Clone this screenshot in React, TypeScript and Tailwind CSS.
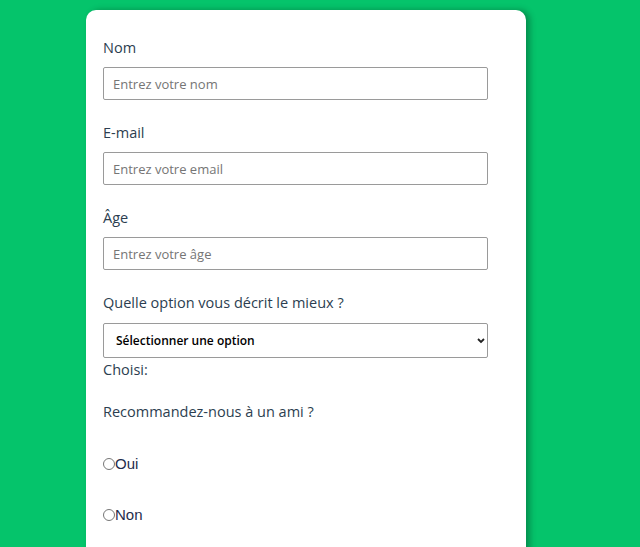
import React, { useState } from 'react';

const fields = [
  { id: 'nom', label: 'Nom', type: 'text', placeholder: 'Entrez votre nom' },
  { id: 'email', label: 'E-mail', type: 'email', placeholder: 'Entrez votre email' },
  { id: 'age', label: 'Âge', type: 'number', placeholder: 'Entrez votre âge' },
];

const App: React.FC = () => {
  const [choice, setChoice] = useState('');

  return (
    <main className="min-h-[547px] w-full bg-[#05c46b] pt-[10px] pl-[86px] font-['Open_Sans',sans-serif]">
      <form className="w-[440px] min-h-[560px] rounded-[10px] bg-white px-[17px] pt-[28px] shadow-[4px_0_6px_rgba(0,0,0,0.28)]">
        {fields.map((f) => (
          <div key={f.id} className="mb-[23px]">
            <label htmlFor={f.id} className="mb-[9px] block text-[14.5px] leading-[20px] text-[#2c3e50]">
              {f.label}
            </label>
            <input
              id={f.id}
              type={f.type}
              placeholder={f.placeholder}
              className="block h-[33px] w-[385px] rounded-[2px] border border-[#9a9a9a] px-[9px] text-[13px] text-[#333] placeholder:text-[#757575] outline-none"
            />
          </div>
        ))}

        <label htmlFor="option" className="mb-[10px] block text-[14.5px] leading-[20px] text-[#2c3e50]">
          Quelle option vous décrit le mieux ?
        </label>
        <div className="relative w-[385px]">
          <select
            id="option"
            value={choice}
            onChange={(e) => setChoice(e.target.value)}
            className="block h-[35px] w-full appearance-none rounded-[2px] border border-[#9a9a9a] bg-white pl-[12px] text-[12px] font-semibold text-black outline-none"
          >
            <option value="">Sélectionner une option</option>
            <option value="etudiant">Étudiant</option>
            <option value="pro">Professionnel</option>
            <option value="autre">Autre</option>
          </select>
          <svg className="pointer-events-none absolute right-[3px] top-[15px]" width="8" height="6" viewBox="0 0 8 6">
            <path d="M1 1l3 3 3-3" fill="none" stroke="#222" strokeWidth="1.8" />
          </svg>
        </div>
        <p className="mt-[2px] text-[14.5px] leading-[20px] text-[#2c3e50]">Choisi:{choice ? ` ${choice}` : ''}</p>

        <p className="mt-[22px] text-[14.5px] leading-[20px] text-[#2c3e50]">Recommandez-nous à un ami ?</p>

        <div className="mt-[32px] flex flex-col gap-[31px] font-['Liberation_Sans',Arial,sans-serif] text-[15px] leading-[20px] text-[#1f2d4d]">
          {['Oui', 'Non'].map((v) => (
            <label key={v} className="flex items-center">
              <input type="radio" name="recommande" value={v} className="m-0 h-[12px] w-[12px] accent-[#666]" />
              <span>{v}</span>
            </label>
          ))}
        </div>
      </form>
    </main>
  );
};

export default App;
